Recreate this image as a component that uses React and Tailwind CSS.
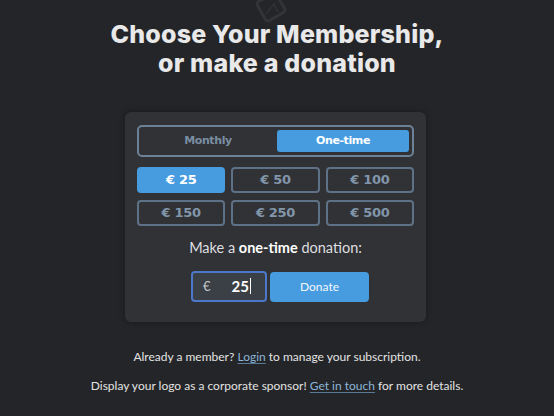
import { useState } from 'react'

const amounts = [25, 50, 100, 150, 250, 500]

export default function App() {
  const [mode, setMode] = useState('one-time')
  const [amount, setAmount] = useState(25)

  return (
    <div className="min-h-[416px] bg-[#242528] flex flex-col items-center relative overflow-hidden" style={{ fontFamily: 'Lato, "Open Sans", sans-serif' }}>
      {/* faint logo behind title */}
      <svg className="absolute left-[252px] top-[-6px]" width="38" height="34" viewBox="0 0 38 34" fill="none">
        <rect x="8" y="2" width="22" height="22" rx="3" transform="rotate(-30 19 13)" stroke="#323438" strokeWidth="3" />
        <path d="M14 20 L22 10 L26 18" stroke="#2e3034" strokeWidth="2" />
      </svg>

      <h1 className="relative mt-[20px] text-center text-[25px] leading-[29px] font-extrabold text-[#e9e9ea] tracking-[0.2px]" style={{ fontFamily: 'Inter, "Open Sans", sans-serif' }}>
        Choose Your Membership,<br />or make a donation
      </h1>

      <div className="mt-[34px] mr-[3px] w-[301px] bg-[#313235] rounded-md px-3 pt-[13px] pb-[20px] shadow-[0_0_6px_rgba(0,0,0,0.35)]">
        {/* mode toggle */}
        <div className="flex h-8 p-[3px] gap-[3px] border-2 border-[#6c8196] rounded-[5px]" style={{ fontFamily: '"DejaVu Sans", Verdana, sans-serif' }}>
          <button
            onClick={() => setMode('monthly')}
            className={`flex-1 rounded-[3px] text-[11px] font-bold tracking-[-0.4px] ${mode === 'monthly' ? 'bg-[#479ce0] text-white' : 'text-[#7a8ea3]'}`}
          >
            Monthly
          </button>
          <button
            onClick={() => setMode('one-time')}
            className={`flex-1 rounded-[3px] text-[11px] font-bold tracking-[-0.4px] ${mode === 'one-time' ? 'bg-[#479ce0] text-white' : 'text-[#7a8ea3]'}`}
          >
            One-time
          </button>
        </div>

        {/* amounts */}
        <div className="mt-[10px] grid grid-cols-3 gap-x-[6px] gap-y-[7px]" style={{ fontFamily: '"DejaVu Sans", Verdana, sans-serif' }}>
          {amounts.map(a => (
            <button
              key={a}
              onClick={() => setAmount(a)}
              className={`h-[26px] rounded-[4px] text-[13px] font-bold tracking-[-0.3px] ${amount === a ? 'bg-[#479ce0] text-white' : 'border-2 border-[#5e7287] text-[#8296ab]'}`}
            >
              € {a}
            </button>
          ))}
        </div>

        <p className="mt-[11px] text-center text-[14.5px] text-[#dedfe0]">
          Make a <span className="font-bold text-white">{mode === 'one-time' ? 'one-time' : 'monthly'}</span> donation:
        </p>

        <div className="mt-[12px] flex justify-center gap-[3px] pl-[9px]">
          <div className="w-[76px] h-[31px] rounded-[4px] border-2 border-[#4d78c9] bg-[#3b4046] flex items-center pl-[10px]">
            <span className="text-[13px] text-[#c5c8cc]">€</span>
            <span className="ml-[21px] text-[15px] font-bold text-white leading-none">{amount}</span>
            <span className="w-px h-[16px] bg-white ml-px" />
          </div>
          <button className="w-[99px] h-[30px] mt-px rounded-[4px] bg-[#479ce0] text-[12px] text-[#f2f7fc]">
            Donate
          </button>
        </div>
      </div>

      <p className="mt-[26px] text-[12px] text-[#e3e3e3]">
        Already a member? <a className="text-[#8cb6d9] underline decoration-[#5a7a96] underline-offset-2">Login</a> to manage your subscription.
      </p>
      <p className="mt-[11px] text-[12px] text-[#e3e3e3]">
        Display your logo as a corporate sponsor! <a className="text-[#8cb6d9] underline decoration-[#5a7a96] underline-offset-2">Get in touch</a> for more details.
      </p>
    </div>
  )
}
